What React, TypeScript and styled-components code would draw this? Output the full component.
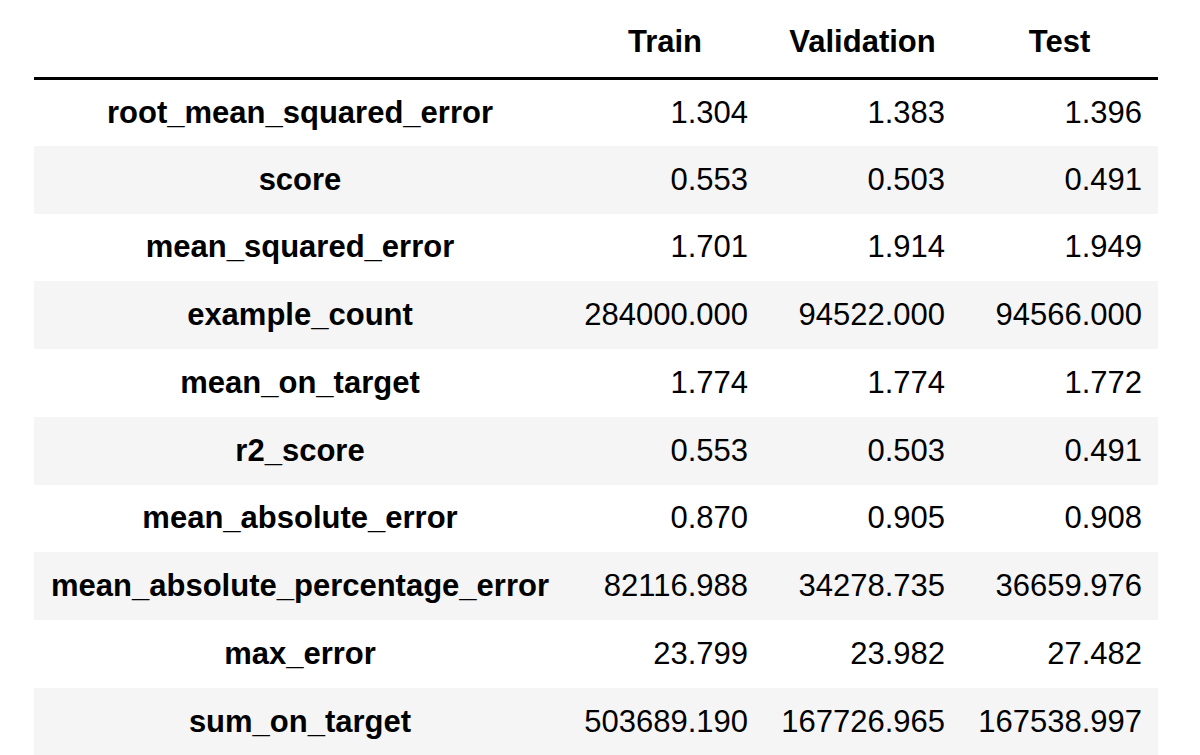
import React from 'react'
import styled, { createGlobalStyle } from 'styled-components'

const GlobalStyle = createGlobalStyle`
    html, body {
        margin: 0;
        padding: 0;
        background: #fff;
    }
    body {
        font-family: 'Liberation Sans', Arial, Helvetica, sans-serif;
        color: #000;
    }
`

const Page = styled.div`
    width: 1200px;
    height: 755px;
    overflow: hidden;
    padding-left: 34px;
    box-sizing: border-box;
`

const Table = styled.table`
    border-collapse: collapse;
    border-spacing: 0;
    font-size: 31px;
    table-layout: fixed;
    width: 1124px;
`

const HeadRow = styled.tr`
    height: 78px;
    border-bottom: 3px solid #000;
`

const HeadCell = styled.th`
    font-weight: bold;
    text-align: center;
    vertical-align: middle;
    padding: 8px 16px 0;
    white-space: nowrap;
`

const Row = styled.tr<{ $striped: boolean }>`
    height: 67.75px;
    background: ${(p) => (p.$striped ? '#f5f5f5' : '#fff')};
`

const IndexCell = styled.th`
    font-weight: bold;
    text-align: center;
    padding: 0 16px;
    white-space: nowrap;
`

const ValueCell = styled.td`
    text-align: right;
    padding: 0 16px;
    white-space: nowrap;
`

const columns = ['Train', 'Validation', 'Test']

const rows: [string, string[]][] = [
    ['root_mean_squared_error', ['1.304', '1.383', '1.396']],
    ['score', ['0.553', '0.503', '0.491']],
    ['mean_squared_error', ['1.701', '1.914', '1.949']],
    ['example_count', ['284000.000', '94522.000', '94566.000']],
    ['mean_on_target', ['1.774', '1.774', '1.772']],
    ['r2_score', ['0.553', '0.503', '0.491']],
    ['mean_absolute_error', ['0.870', '0.905', '0.908']],
    ['mean_absolute_percentage_error', ['82116.988', '34278.735', '36659.976']],
    ['max_error', ['23.799', '23.982', '27.482']],
    ['sum_on_target', ['503689.190', '167726.965', '167538.997']],
]

const App = () => {
    return (
        <>
            <GlobalStyle />
            <Page>
                <Table>
                    <colgroup>
                        <col style={{ width: 532 }} />
                        <col style={{ width: 198 }} />
                        <col style={{ width: 197 }} />
                        <col style={{ width: 197 }} />
                    </colgroup>
                    <thead>
                        <HeadRow>
                            <HeadCell />
                            {columns.map((c) => (
                                <HeadCell key={c}>{c}</HeadCell>
                            ))}
                        </HeadRow>
                    </thead>
                    <tbody>
                        {rows.map(([name, values], i) => (
                            <Row key={name} $striped={i % 2 === 1}>
                                <IndexCell>{name}</IndexCell>
                                {values.map((v, j) => (
                                    <ValueCell key={`${name}-${j}`}>{v}</ValueCell>
                                ))}
                            </Row>
                        ))}
                    </tbody>
                </Table>
            </Page>
        </>
    )
}

export default App
